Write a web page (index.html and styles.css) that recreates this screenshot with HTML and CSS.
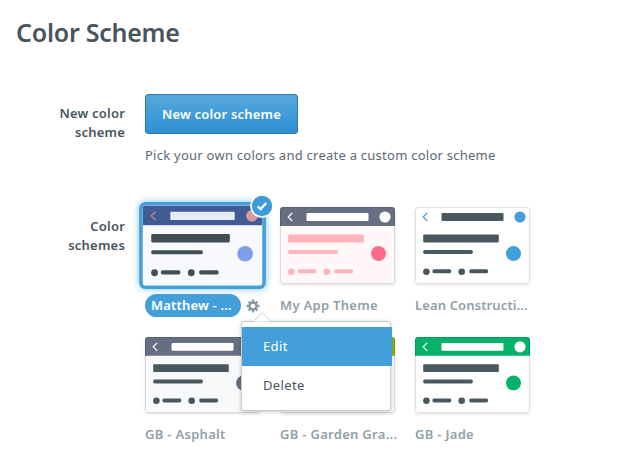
FILE: index.html
```
<!DOCTYPE html>
<html lang="en">
<head>
    <meta charset="UTF-8">
    <meta name="viewport" content="width=device-width, initial-scale=1.0">
    <title>Color Scheme</title>
    <link rel="stylesheet" href="styles.css">
</head>
<body>

    <!-- Shared preview drawing, coloured by the theme classes -->
    <svg class="sprite" width="0" height="0">
        <symbol id="preview" viewBox="0 0 115 77" preserveAspectRatio="none">
            <rect class="p-body" width="115" height="77"/>
            <rect class="p-header" width="115" height="19"/>
            <path class="p-back" d="M12.2 6L8.2 10l4 4"/>
            <rect class="p-title" x="26.5" y="6" width="62" height="8" rx="1"/>
            <circle class="p-action" cx="105" cy="10" r="5.6"/>
            <rect class="p-text" x="8.2" y="27.5" width="75.6" height="8" rx="1"/>
            <rect class="p-text" x="8.2" y="43" width="49.6" height="4" rx="1.5"/>
            <circle class="p-accent" cx="98.5" cy="46.5" r="7.5"/>
            <circle class="p-text" cx="11.4" cy="64.7" r="3.3"/>
            <rect class="p-text" x="17.5" y="62.3" width="18.7" height="4" rx="1.5"/>
            <circle class="p-text" cx="46.7" cy="64.7" r="3.3"/>
            <rect class="p-text" x="54.3" y="62.3" width="18.7" height="4" rx="1.5"/>
        </symbol>
    </svg>

    <h1>Color Scheme</h1>

    <div class="row row-new">
        <div class="label">New color scheme</div>
        <div class="field">
            <button class="btn">New color scheme</button>
            <p class="hint">Pick your own colors and create a custom color scheme</p>
        </div>
    </div>

    <div class="row row-schemes">
        <div class="label">Color schemes</div>
        <div class="schemes">
            <div class="scheme selected theme-matthew">
                <div class="thumb"><svg><use href="#preview"/></svg></div>
                <svg class="check" viewBox="0 0 24 24">
                    <circle cx="12" cy="12" r="11.8" fill="#fff"/>
                    <circle cx="12" cy="12" r="10.2" fill="#3d9bd8"/>
                    <path d="M7.7 12.4l2.9 2.7 5.6-6.2" fill="none" stroke="#fff" stroke-width="2.2"/>
                </svg>
                <div class="caption">
                    <span class="name">Matthew - ...</span>
                    <svg class="gear" viewBox="0 0 14 14">
                        <circle cx="7" cy="7" r="3.4" fill="none" stroke="#8799a4" stroke-width="2.2"/>
                        <path d="M7 .6v2.4M7 11v2.4M.6 7H3M11 7h2.4M2.6 2.6l1.6 1.6M9.8 9.8l1.6 1.6M2.6 11.4l1.6-1.6M9.8 4.2l1.6-1.6" stroke="#8799a4" stroke-width="2.5"/>
                    </svg>
                </div>
                <div class="menu">
                    <svg class="arrow" viewBox="0 0 18 10"><path d="M0 9.5L9 .7l9 8.8" fill="#fff" stroke="#ccc"/></svg>
                    <a class="menu-item active">Edit</a>
                    <a class="menu-item">Delete</a>
                </div>
            </div>
            <div class="scheme theme-app">
                <div class="thumb"><svg><use href="#preview"/></svg></div>
                <div class="caption"><span class="name">My App Theme</span></div>
            </div>
            <div class="scheme theme-lean">
                <div class="thumb"><svg><use href="#preview"/></svg></div>
                <div class="caption"><span class="name">Lean Constructi...</span></div>
            </div>
            <div class="scheme short theme-asphalt">
                <div class="thumb"><svg><use href="#preview"/></svg></div>
                <div class="caption"><span class="name">GB - Asphalt</span></div>
            </div>
            <div class="scheme short theme-garden">
                <div class="thumb"><svg><use href="#preview"/></svg></div>
                <div class="caption"><span class="name">GB - Garden Gra...</span></div>
            </div>
            <div class="scheme short theme-jade">
                <div class="thumb"><svg><use href="#preview"/></svg></div>
                <div class="caption"><span class="name">GB - Jade</span></div>
            </div>
        </div>
    </div>

</body>
</html>
```
FILE: styles.css
```
* {
    box-sizing: border-box;
}

body {
    margin: 0;
    height: 451px;
    overflow: hidden;
    background: #fff;
    color: #47555e;
    font-family: "Noto Sans", "Open Sans", sans-serif;
    font-size: 13px;
}

.sprite {
    position: absolute;
}

h1 {
    margin: 0;
    padding: 16px 0 0 16px;
    height: 94px;
    font-size: 25px;
    line-height: 33px;
    font-weight: 600;
    letter-spacing: -0.25px;
}

.row {
    display: flex;
    gap: 20px;
}

.row-new {
    height: 113px;
}

.label {
    width: 125px;
    padding: 10px 0 0 45px;
    text-align: right;
    font-weight: 600;
    line-height: 19px;
    letter-spacing: 0.2px;
}

.btn {
    display: block;
    width: 153px;
    height: 40px;
    padding: 0;
    border: 1px solid #2a78ae;
    border-radius: 3px;
    background: linear-gradient(#58a9dd, #2c90d3);
    color: #fff;
    font-family: inherit;
    font-size: 13px;
    font-weight: 600;
    letter-spacing: 0.2px;
}

.hint {
    margin: 11px 0 0;
    line-height: 20px;
    color: #5b6973;
    letter-spacing: 0.25px;
    white-space: nowrap;
}

.schemes {
    display: grid;
    grid-template-columns: repeat(3, 115px);
    grid-auto-rows: 130px;
    column-gap: 20px;
}

.scheme {
    position: relative;
}

.thumb {
    height: 77px;
    border-radius: 3px;
    overflow: hidden;
    position: relative;
    box-shadow: 0 1px 3px rgba(0, 0, 0, 0.12);
}

.thumb::after {
    content: "";
    position: absolute;
    inset: 0;
    border: 1px solid rgba(0, 0, 0, 0.12);
    border-radius: 3px;
}

.short .thumb {
    height: 76px;
}

.thumb svg {
    display: block;
    width: 100%;
    height: 100%;
}

.caption {
    display: flex;
    align-items: center;
    gap: 5px;
    height: 23px;
    margin-top: 9px;
    color: #8fa0aa;
    font-weight: 600;
    letter-spacing: 0.3px;
    white-space: nowrap;
}

.theme-lean .caption {
    letter-spacing: 0.13px;
}

/* Selected scheme */
.selected .thumb {
    transform: scale(1.04);
    box-shadow: 0 0 0 3.4px #439fd9, 0 0 7px 3px #7cc4f0;
}

.selected .thumb::after {
    border: 0;
}

.selected .caption {
    margin-top: 10px;
    letter-spacing: 0.18px;
}

.selected .name {
    width: 96px;
    height: 23px;
    padding-left: 6px;
    border-radius: 12px;
    background: #439fd9;
    color: #fff;
    line-height: 23px;
}

.check {
    position: absolute;
    left: 105px;
    top: -13px;
    width: 24px;
    height: 24px;
}

.gear {
    width: 14px;
    height: 14px;
    flex: none;
}

.menu {
    position: absolute;
    z-index: 2;
    left: 96px;
    top: 114px;
    width: 150px;
    height: 90px;
    padding-top: 5px;
    border: 1px solid #ccc;
    border-radius: 3px;
    background: #fff;
    box-shadow: 0 1px 4px rgba(0, 0, 0, 0.2);
}

.arrow {
    position: absolute;
    left: 11px;
    top: -10px;
    width: 18px;
    height: 10px;
}

.menu-item {
    display: block;
    width: 150px;
    height: 39px;
    padding-left: 21px;
    line-height: 39px;
    letter-spacing: 0.35px;
}

.menu-item.active {
    background: #439fd9;
    color: #fff;
}

/* Preview colours */
.p-body { fill: var(--body); }
.p-header { fill: var(--header); }
.p-back { fill: none; stroke: var(--back); stroke-width: 1.2; }
.p-title { fill: var(--title); }
.p-action { fill: var(--action); }
.p-text { fill: var(--text, #49575f); }
.p-accent { fill: var(--accent); }

.theme-matthew {
    --body: #f7f9fc;
    --header: #425b94;
    --back: #c78692;
    --title: #e4ecf5;
    --action: #d99a9d;
    --text: #424f56;
    --accent: #7d9fe8;
}

.theme-app {
    --body: #fff7f8;
    --header: #666e82;
    --back: #fff;
    --title: #fff;
    --action: #fff;
    --text: #ffb4ba;
    --accent: #ff6b89;
}

.theme-lean {
    --body: #fff;
    --header: #fff;
    --back: #439fd9;
    --title: #49575f;
    --action: #439fd9;
    --accent: #439fd9;
}

.theme-asphalt {
    --body: #f7f9fb;
    --header: #666e82;
    --back: #fff;
    --title: #fff;
    --action: #fff;
    --accent: #666e82;
}

.theme-garden {
    --body: #f9fafa;
    --header: #86b113;
    --back: #fff;
    --title: #fff;
    --action: #fff;
    --accent: #86b113;
}

.theme-jade {
    --body: #fff;
    --header: #05b269;
    --back: #fff;
    --title: #fff;
    --action: #fff;
    --accent: #05b269;
}
```
